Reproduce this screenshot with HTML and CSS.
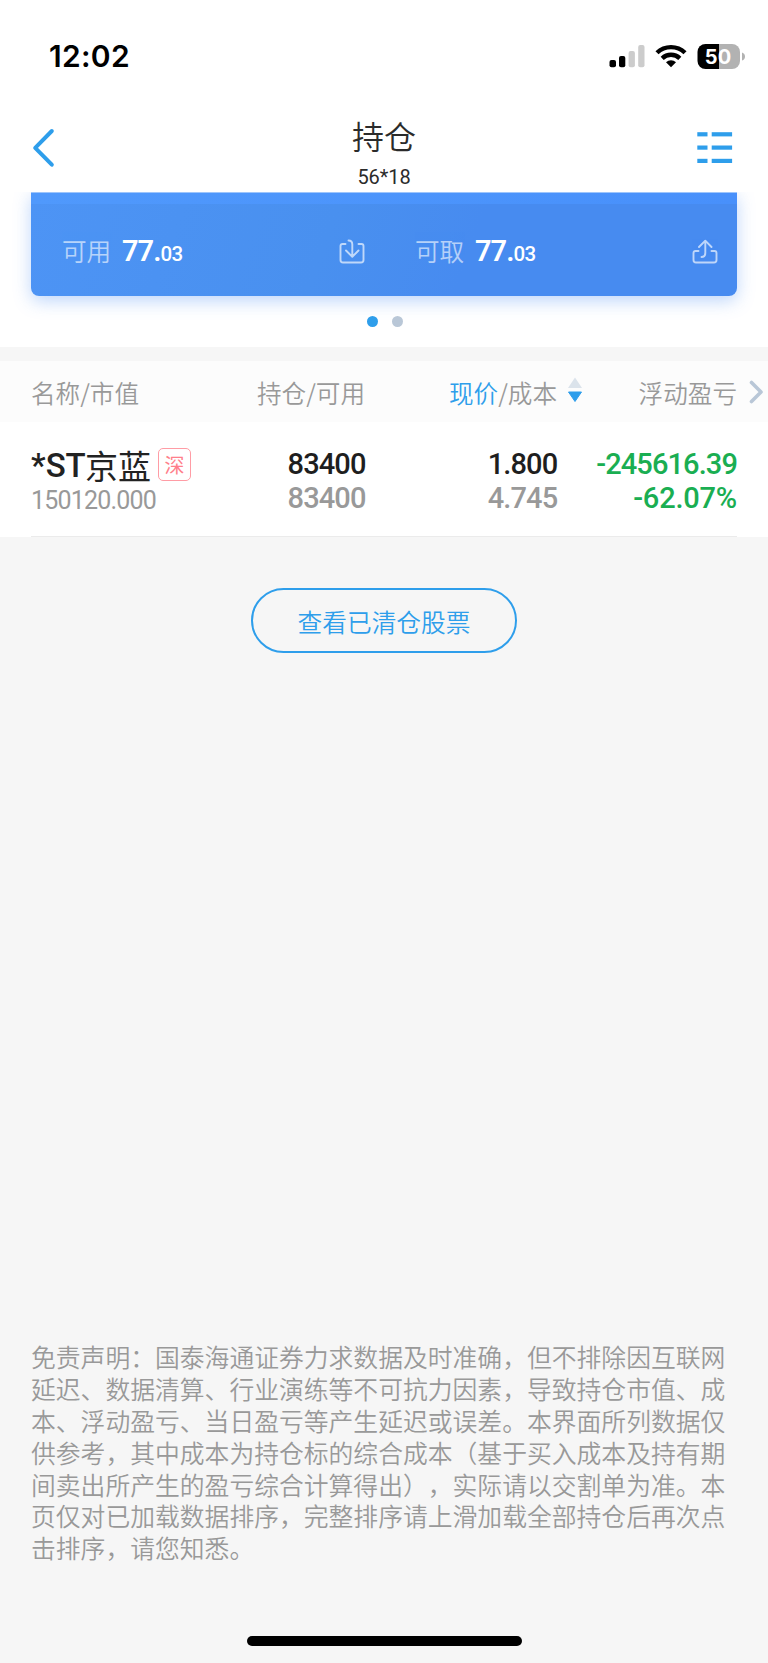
FILE: index.html
```html
<!DOCTYPE html>
<html lang="zh-CN">
<head>
<meta charset="utf-8">
<title>持仓</title>
<link rel="stylesheet" href="styles.css">
</head>
<body>
<div class="screen">
  <header class="top">
    <div class="status">
      <span class="time">12:02</span>
      <svg class="status-icons" width="138" height="28" viewBox="608 42 138 28">
        <rect x="609.5" y="60" width="6.5" height="7.2" rx="2"/>
        <rect x="619" y="56" width="6.3" height="11.2" rx="2"/>
        <rect x="628.6" y="51" width="6.3" height="16.2" rx="2" fill="#ccc"/>
        <rect x="638.2" y="45" width="6.3" height="22.2" rx="2" fill="#ccc"/>
        <g fill="none" stroke="#000" stroke-width="4.4">
          <path d="M657 52.8 A20 20 0 0 1 685 52.8"/>
          <path d="M662.2 58.4 A12.6 12.6 0 0 1 679.8 58.4"/>
        </g>
        <path d="M671 67.200 L666 62.200 A7.200 7.200 0 0 1 676 62.200 Z"/>
        <path d="M705.500 44 H719 V69 H705.500 A8 8 0 0 1 697.500 61 V52 A8 8 0 0 1 705.500 44Z"/>
        <path d="M719 44 H732 A8 8 0 0 1 740 52 V61 A8 8 0 0 1 732 69 H719Z" fill="#b2b2b2"/>
        <path d="M742 52.500 Q745 53.500 745 56.500 T742 60.500Z" fill="#b2b2b2"/>
        <text class="battery" x="718" y="64" text-anchor="middle">50</text>
      </svg>
    </div>
    <div class="nav">
      <svg class="back" width="24" height="42" viewBox="31 127 24 42"><path d="M51.800 131 L35.200 147.800 L51.800 164.700" fill="none" stroke="#2e9eeb" stroke-width="4" stroke-linecap="round" stroke-linejoin="round"/></svg>
      <div class="titles">
        <h1 class="title">持仓</h1>
        <div class="account">56*18</div>
      </div>
      <svg class="menu" width="36" height="34" viewBox="697 131 36 34" fill="#2e9eeb">
        <rect x="697.300" y="132.200" width="10.200" height="4.200"/><rect x="711.700" y="132.200" width="20.400" height="4.200"/>
        <rect x="697.300" y="145.500" width="10.200" height="4.200"/><rect x="711.700" y="145.500" width="20.400" height="4.200"/>
        <rect x="697.300" y="158.800" width="10.200" height="4.200"/><rect x="711.700" y="158.800" width="20.400" height="4.200"/>
      </svg>
    </div>
  </header>

  <section class="summary">
    <div class="card">
      <div class="strip"></div>
      <div class="funds">
        <div class="fund">
          <span class="label">可用</span><span class="amount">77.<small>03</small></span>
          <svg class="fund-icon" width="26" height="26" viewBox="0 0 26 26"><path d="M6.500 5 H3.500 Q1.500 5 1.500 7 V21 Q1.500 23.500 4 23.500 H22 Q24.500 23.500 24.500 21 V7 Q24.500 5 22.500 5 H19.500 M9.500 1.500 Q13.300 1.500 13.300 5.500 V17.500 M7 11.500 L13.300 17.800 L19.500 11.500"/></svg>
        </div>
        <div class="fund">
          <span class="label">可取</span><span class="amount">77.<small>03</small></span>
          <svg class="fund-icon" width="26" height="26" viewBox="0 0 26 26"><path d="M6.500 12 H3.500 Q1.500 12 1.500 14 V21 Q1.500 23.500 4 23.500 H22 Q24.500 23.500 24.500 21 V14 Q24.500 12 22.500 12 H19.500 M13.300 2 V14 Q13.300 18 9.500 18 M7 8 L13.300 1.700 L19.500 8"/></svg>
        </div>
      </div>
    </div>
    <div class="dots"><i class="dot active"></i><i class="dot"></i></div>
  </section>

  <section class="positions">
    <div class="thead">
      <span class="c1">名称/市值</span>
      <span class="c2">持仓/可用</span>
      <span class="c3"><b>现价</b>/成本</span>
      <svg class="sort" width="16" height="26" viewBox="0 0 16 26"><path d="M8 .5 L15 11 H1Z" fill="#dbe3eb"/><path d="M1.500 15 H14.500 L8 24.500Z" fill="#2e9eeb" stroke="#2e9eeb" stroke-linejoin="round"/></svg>
      <span class="c4">浮动盈亏</span>
      <svg class="more" width="15" height="24" viewBox="0 0 15 24"><path d="M2.500 2.500 L12 12 L2.500 21.500" fill="none" stroke="#b9c7d7" stroke-width="3.600" stroke-linecap="round" stroke-linejoin="round"/></svg>
    </div>
    <div class="row">
      <div class="stock">
        <div class="name"><span class="latin">*ST</span><span class="han">京蓝</span><span class="tag">深</span></div>
        <div class="value">150120.000</div>
      </div>
      <div class="nums hold"><div>83400</div><div class="sub">83400</div></div>
      <div class="nums price"><div>1.800</div><div class="sub">4.745</div></div>
      <div class="nums profit"><div>-245616.39</div><div class="rate">-62.07%</div></div>
    </div>
  </section>

  <main class="rest">
    <button class="cleared">查看已清仓股票</button>
    <p class="notice">免责声明：国泰海通证券力求数据及时准确，但不排除因互联网<br>延迟、数据清算、行业演练等不可抗力因素，导致持仓市值、成<br>本、浮动盈亏、当日盈亏等产生延迟或误差。本界面所列数据仅<br>供参考，其中成本为持仓标的综合成本（基于买入成本及持有期<br>间卖出所产生的盈亏综合计算得出），实际请以交割单为准。本<br>页仅对已加载数据排序，完整排序请上滑加载全部持仓后再次点<br>击排序，请您知悉。</p>
    <div class="home"></div>
  </main>
</div>
</body>
</html>
```
FILE: styles.css
```css
* { box-sizing: border-box; }
body { margin: 0; background: #f6f6f6; font-family: "Noto Sans CJK SC", sans-serif; }
svg { display: block; flex: none; }
.screen { width: 768px; height: 1663px; display: flex; flex-direction: column; overflow: hidden; }

.top { height: 192px; background: #fff; }
.status { height: 112px; padding: 42px 22px 0 49px; display: flex; justify-content: space-between; align-items: flex-start; }
.time { font: 600 30px/28px Inter, sans-serif; letter-spacing: 0.3px; }
.battery { font: 700 20px Inter, sans-serif; fill: #fff; }
.nav { height: 80px; padding: 0 35px 0 31px; display: grid; grid-template-columns: 36px 1fr 36px; }
.back { margin-top: 15px; }
.menu { margin-top: 19px; }
.titles { text-align: center; color: #2b2b2b; padding-left: 4px; }
.title { margin: 5px 0 0; font-size: 32px; line-height: 36px; font-weight: 350; }
.account { margin-top: 12px; font: 450 20px/24px Roboto, sans-serif; letter-spacing: -0.1px; }

.summary { height: 155px; background: #fff; padding: 0 31px; overflow: hidden; }
.card { height: 104px; border-radius: 0 0 8px 8px; background: linear-gradient(110deg, #4d94f5 0%, #4990ef 42%, #478bf0 62%, #478bf0 100%); box-shadow: 0 5px 17px rgba(75, 142, 245, .36); overflow: hidden; }
.strip { height: 12px; background: linear-gradient(90deg, #5099fc, #4890fb); border-top: 1px solid #9dc5fc; }
.funds { display: flex; height: 92px; }
.fund { width: 353px; padding: 3px 19px 0 31px; display: flex; align-items: center; color: #fff; }
.label { width: 60px; margin-top: -3px; font-size: 24.6px; line-height: 30px; font-weight: 350; opacity: .6; }
.amount { font: 600 29px/30px Roboto, sans-serif; letter-spacing: -1px; margin-top: 2px; }
.amount small { font-size: 20.5px; font-weight: 500; letter-spacing: -0.6px; }
.fund-icon { margin-left: auto; fill: none; stroke: #fff; stroke-width: 1.900; stroke-linecap: round; stroke-linejoin: round; opacity: .65; }
.dots { display: flex; justify-content: center; gap: 14px; padding: 20px 0 0 1px; }
.dot { width: 11px; height: 11px; border-radius: 50%; background: #b9c7d7; }
.dot.active { background: #2e9eeb; }

.positions { margin-top: 14px; background: #fff; }
.thead { height: 61px; padding: 0 4px 0 31px; display: flex; align-items: center; background: #fcfcfc; color: #999; font-size: 24.6px; line-height: 36px; font-weight: 350; white-space: nowrap; }
.c1 { width: 200px; }
.c2 { width: 134px; text-align: right; }
.c3 { width: 192px; text-align: right; }
.c3 b { color: #2e9eeb; font-weight: 350; }
.sort { margin: 0 0 4px 10px; }
.c4 { width: 154px; text-align: right; }
.more { margin: 0 0 0 auto; }
.row { height: 115px; margin: 0 31px; padding-top: 24px; display: flex; border-bottom: 1px solid #ebebeb; }
.stock { width: 200px; white-space: nowrap; }
.name { height: 40px; display: flex; align-items: center; font-size: 33px; line-height: 40px; color: #222; }
.latin { font-family: Roboto, sans-serif; font-weight: 500; width: 54px; }
.han { margin-top: -2px; }
.tag { width: 33px; height: 33px; margin: -3px 0 0 7px; border: 1.500px solid #ff9ca5; border-radius: 5px; color: #ff7f8b; font-size: 20px; line-height: 31px; text-align: center; }
.value { font: 400 25px/30px Roboto, sans-serif; color: #999; letter-spacing: -.8px; }
.nums { font: 500 29px/34px Roboto, sans-serif; letter-spacing: -.9px; color: #1e1e1e; text-align: right; white-space: nowrap; padding-top: 1px; }
.nums .sub { color: #999; }
.hold { width: 135px; }
.price { width: 192px; }
.nums.profit { width: 180px; color: #1aae52; }
.rate { letter-spacing: -.2px; }

.rest { flex: 1; display: flex; flex-direction: column; align-items: center; }
.cleared { margin: 51px 0 0; width: 266px; height: 65px; border: 2px solid #2e9eeb; border-radius: 33px; background: none; color: #2e9eeb; font: 350 24.700px/36px "Noto Sans CJK SC", sans-serif; padding: 0; }
.notice { margin: auto 0 0; align-self: flex-start; padding-left: 31px; font-size: 24.800px; line-height: 31.800px; font-weight: 350; color: #999; white-space: nowrap; text-spacing-trim: space-all; }
.home { width: 275px; height: 10px; margin: 72px 0 17px; border-radius: 5px; background: #000; }
```
